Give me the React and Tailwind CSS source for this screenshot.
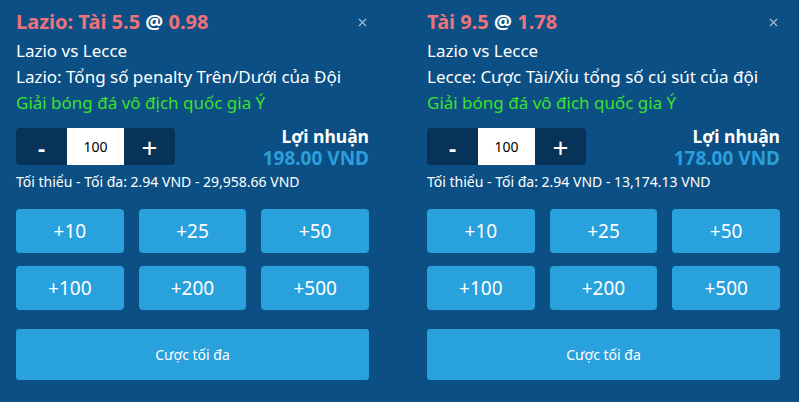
import { X } from "lucide-react";

const SLIPS = [
  {
    pick: "Lazio: Tài 5.5",
    odds: "0.98",
    match: "Lazio vs Lecce",
    market: "Lazio: Tổng số penalty Trên/Dưới của Đội",
    league: "Giải bóng đá vô địch quốc gia Ý",
    stake: "100",
    profit: "198.00 VND",
    range: "Tối thiểu - Tối đa: 2.94 VND - 29,958.66 VND",
  },
  {
    pick: "Tài 9.5",
    odds: "1.78",
    match: "Lazio vs Lecce",
    market: "Lecce: Cược Tài/Xỉu tổng số cú sút của đội",
    league: "Giải bóng đá vô địch quốc gia Ý",
    stake: "100",
    profit: "178.00 VND",
    range: "Tối thiểu - Tối đa: 2.94 VND - 13,174.13 VND",
  },
];

const QUICK = ["+10", "+25", "+50", "+100", "+200", "+500"];

function Slip({ s }) {
  return (
    <div className="w-[353px] shrink-0">
      <div className="flex items-center justify-between pt-[10px]">
        <div className="text-[20px] font-bold leading-[24px]">
          <span className="text-[#f0717a]">{s.pick}</span>
          <span className="text-white"> @ </span>
          <span className="text-[#f0717a]">{s.odds}</span>
        </div>
        <button className="text-[#a7c0d6]">
          <X size={13} strokeWidth={2} />
        </button>
      </div>
      <div className="mt-[4px] text-[17px] leading-[26px] text-white">{s.match}</div>
      <div className="text-[17px] leading-[26px] text-white">{s.market}</div>
      <div className="text-[17px] leading-[26px] text-[#3ee12a]">{s.league}</div>

      <div className="mt-[12px] flex h-[37px] items-start justify-between">
        <div className="flex h-[37px] overflow-hidden rounded-[4px] bg-[#073358]">
          <button className="w-[51px] text-[22px] font-bold leading-none text-white">-</button>
          <div className="flex w-[57px] items-center justify-center bg-white text-[14px] text-black">
            {s.stake}
          </div>
          <button className="w-[51px] text-[28px] leading-none text-white">+</button>
        </div>
        <div className="-mt-[3px] text-right font-bold">
          <div className="text-[17.5px] leading-[22px] text-white">Lợi nhuận</div>
          <div className="text-[19px] leading-[22px] text-[#2b9fdb]">{s.profit}</div>
        </div>
      </div>

      <div className="mt-[8px] text-[14px] leading-[18px] text-white">{s.range}</div>

      <div className="mt-[18px] grid grid-cols-3 gap-x-[15px] gap-y-[13px]">
        {QUICK.map((q) => (
          <button
            key={q}
            className="h-[44px] rounded-[4px] bg-[#29a1dc] text-[19px] text-white"
          >
            {q}
          </button>
        ))}
      </div>

      <button className="mt-[19px] h-[51px] w-full rounded-[3px] bg-[#29a1dc] text-[14px] text-white">
        Cược tối đa
      </button>
    </div>
  );
}

export default function App() {
  return (
    <div
      className="flex h-[402px] w-[799px] gap-[58px] overflow-hidden bg-[#0b4f84] px-4"
      style={{ fontFamily: '"Noto Sans", "DejaVu Sans", sans-serif' }}
    >
      {SLIPS.map((s, i) => (
        <Slip key={i} s={s} />
      ))}
    </div>
  );
}
